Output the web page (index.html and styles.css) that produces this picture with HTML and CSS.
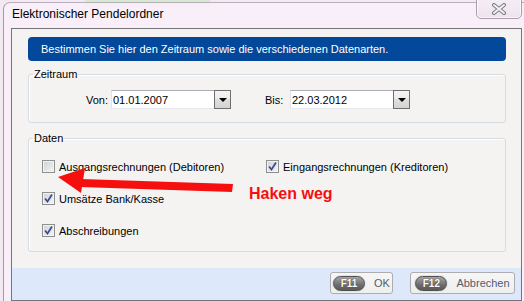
FILE: index.html
```html
<!DOCTYPE html>
<html lang="de">
  <head>
    <meta charset="UTF-8" />
    <title>Elektronischer Pendelordner</title>
    <link rel="stylesheet" href="styles.css">
  </head>
  <body>
    <div class="window">
      <div class="titlebar">
        <span class="title">Elektronischer Pendelordner</span>
        <button class="close">
          <svg width="16" height="12" viewBox="0 0 16 12">
            <path d="M3 2 L13 10 M13 2 L3 10" stroke="#7d7d80" stroke-width="4" stroke-linecap="round" />
            <path d="M3 2 L13 10 M13 2 L3 10" stroke="#f2f2f2" stroke-width="2" stroke-linecap="round" />
          </svg>
        </button>
      </div>

      <div class="client">
        <div class="banner">Bestimmen Sie hier den Zeitraum sowie die verschiedenen Datenarten.</div>

        <fieldset class="group period">
          <legend>Zeitraum</legend>
          <div class="period-row">
            <div class="field">
              <label>Von:</label>
              <div class="combo">
                <span class="value">01.01.2007</span>
                <span class="drop"><i></i></span>
              </div>
            </div>
            <div class="field">
              <label>Bis:</label>
              <div class="combo">
                <span class="value">22.03.2012</span>
                <span class="drop"><i></i></span>
              </div>
            </div>
          </div>
        </fieldset>

        <fieldset class="group data">
          <legend>Daten</legend>
          <div class="data-grid">
            <div class="check">
              <span class="box"></span>
              <span>Ausgangsrechnungen (Debitoren)</span>
            </div>
            <div class="check">
              <span class="box checked">
                <svg width="11" height="11" viewBox="0 0 11 11"><path d="M2 5.5 L4.5 8.5 L9 1.5" fill="none" stroke="#3a4f8c" stroke-width="1.8" /></svg>
              </span>
              <span>Eingangsrechnungen (Kreditoren)</span>
            </div>
            <div class="check">
              <span class="box checked">
                <svg width="11" height="11" viewBox="0 0 11 11"><path d="M2 5.5 L4.5 8.5 L9 1.5" fill="none" stroke="#3a4f8c" stroke-width="1.8" /></svg>
              </span>
              <span>Umsätze Bank/Kasse</span>
            </div>
            <div></div>
            <div class="check">
              <span class="box checked">
                <svg width="11" height="11" viewBox="0 0 11 11"><path d="M2 5.5 L4.5 8.5 L9 1.5" fill="none" stroke="#3a4f8c" stroke-width="1.8" /></svg>
              </span>
              <span>Abschreibungen</span>
            </div>
          </div>
        </fieldset>

        <div class="buttonbar">
          <button class="btn ok"><span class="key">F11</span>OK</button>
          <button class="btn cancel"><span class="key">F12</span>Abbrechen</button>
        </div>
      </div>
    </div>

    <!-- annotation drawn on top of the screenshot -->
    <svg class="note" width="524" height="301" viewBox="0 0 524 301">
      <polygon points="81,179 233,184 232,192 80,187" fill="#f5100f" />
      <polygon points="58,177 85,168 81,193" fill="#f5100f" />
      <text x="249" y="199" class="note-text">Haken weg</text>
    </svg>
  </body>
</html>
```

FILE: styles.css
```css
* {
  margin: 0;
  padding: 0;
  box-sizing: border-box;
}

body {
  width: 524px;
  height: 301px;
  overflow: hidden;
  position: relative;
  font-family: "Liberation Sans", Arial, sans-serif;
  font-size: 11px;
  color: #000;
  background:
    linear-gradient(to right, transparent 85px, #d6ead2 85px, #d6ead2 210px, transparent 210px) top / 100% 6px no-repeat,
    #f2e9f2;
}

.window {
  margin: 2px 0 0 3px;
  width: 521px;
  height: 299px;
  padding-left: 7px;
  border-left: 1px solid #a39aa5;
  border-top: 1px solid #b9aebb;
  border-radius: 7px 0 0 0;
  background-color: rgba(248, 239, 248, 0.9);
}

.titlebar {
  position: relative;
  height: 25px;
  padding: 4px 0 0 1px;
}

.title {
  font-size: 12px;
  line-height: 15px;
}

.close {
  position: absolute;
  left: 465px;
  top: -6px;
  width: 46px;
  height: 22px;
  border: 1px solid #ab9dab;
  border-radius: 0 0 5px 5px;
  background: linear-gradient(#f6eef6, #ede3ed);
  box-shadow: inset 0 0 0 1px rgba(255, 255, 255, 0.7);
  display: flex;
  align-items: flex-end;
  justify-content: center;
  padding-bottom: 3px;
}

.client {
  width: 511px;
  height: 273px;
  border: 1px solid #77737b;
  background-color: #f4f3f1;
  display: flex;
  flex-direction: column;
}

.banner {
  margin: 8px 15px 0 16px;
  height: 24px;
  line-height: 24px;
  padding-left: 13px;
  border-radius: 4px;
  background-color: #03489a;
  color: #fff;
}

.group {
  margin: 6px 15px 0 16px;
  border: 1px solid #d3dce4;
  border-radius: 3px;
  box-shadow: inset 1px 1px 0 #fff;
}

.group legend {
  margin-left: 4px;
  padding: 0 1px;
  line-height: 14px;
}

.period {
  padding: 9px 0 13px 0;
}

.period-row {
  display: flex;
  gap: 34px;
  padding-left: 57px;
}

.field {
  display: flex;
  align-items: center;
}

.field label {
  width: 25px;
}

.combo {
  width: 120px;
  height: 19px;
  display: flex;
  align-items: center;
  background-color: #fff;
  border: 1px solid;
  border-color: #abadb3 #dbdfe6 #e3e9ef #e2e3ea;
}

.combo .value {
  flex: 1;
  padding-left: 1px;
}

.drop {
  width: 17px;
  height: 19px;
  margin: -1px -1px -1px 0;
  border: 1px solid #6f6f6f;
  background: linear-gradient(#f4f4f4, #ebebeb 50%, #dedede 50%, #d4d4d4);
  display: flex;
  align-items: center;
  justify-content: center;
}

.drop i {
  width: 0;
  height: 0;
  border-left: 4px solid transparent;
  border-right: 4px solid transparent;
  border-top: 4px solid #000;
}

.data {
  margin-top: 8px;
  padding: 15px 0 14px 0;
}

.data-grid {
  display: grid;
  grid-template-columns: 224px auto;
  row-gap: 19px;
  padding-left: 13px;
}

.check {
  display: flex;
  align-items: center;
  gap: 4px;
  height: 13px;
}

.box {
  width: 13px;
  height: 13px;
  border: 1px solid #8e8f8f;
  background: linear-gradient(135deg, #cfd1d4, #f4f4f5);
  box-shadow: inset 0 0 0 1px #f3f3f3;
  display: flex;
  align-items: center;
  justify-content: center;
}

.buttonbar {
  margin-top: auto;
  height: 32px;
  background-color: #dde9fa;
  display: flex;
  justify-content: flex-end;
  gap: 17px;
  padding: 4px 6px 0 0;
}

.btn {
  height: 22px;
  border: 1px solid #adadad;
  border-radius: 3px;
  background: linear-gradient(#f6f6f6, #efefef);
  display: flex;
  align-items: center;
  justify-content: center;
  gap: 9px;
  font-family: inherit;
  font-size: 11px;
  color: #535c6c;
}

.ok {
  width: 63px;
}

.cancel {
  width: 105px;
}

.key {
  width: 32px;
  height: 15px;
  border-radius: 8px;
  border: 1px solid #505050;
  background: linear-gradient(#a6a6a6, #6e6e6e 60%, #5a5a5a);
  box-shadow: 0 0 0 1px #e4e4e4;
  color: #fff;
  font-size: 10px;
  font-weight: bold;
  line-height: 13px;
  text-align: center;
  text-shadow: 0 0 1px #222;
}

.note {
  position: absolute;
  left: 0;
  top: 0;
  pointer-events: none;
}

.note-text {
  font-family: "Liberation Sans", Arial, sans-serif;
  font-size: 16px;
  font-weight: bold;
  fill: #f5100f;
}
```
